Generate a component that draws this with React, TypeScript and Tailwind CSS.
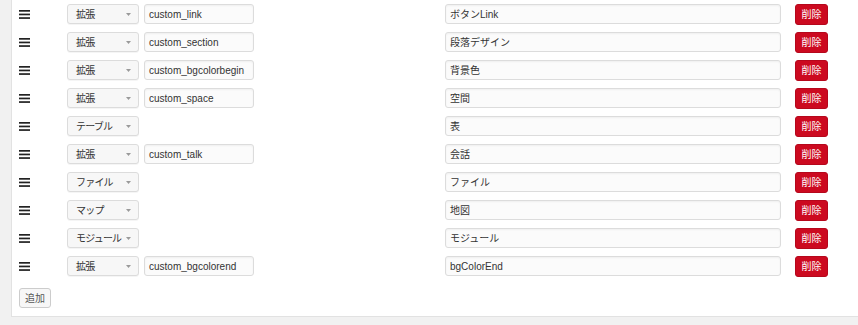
import React from "react";

const rows: { type: string; key?: string; label: string }[] = [
  { type: "拡張", key: "custom_link", label: "ボタンLink" },
  { type: "拡張", key: "custom_section", label: "段落デザイン" },
  { type: "拡張", key: "custom_bgcolorbegin", label: "背景色" },
  { type: "拡張", key: "custom_space", label: "空間" },
  { type: "テーブル", label: "表" },
  { type: "拡張", key: "custom_talk", label: "会話" },
  { type: "ファイル", label: "ファイル" },
  { type: "マップ", label: "地図" },
  { type: "モジュール", label: "モジュール" },
  { type: "拡張", key: "custom_bgcolorend", label: "bgColorEnd" },
];

const font = {
  fontFamily: '"Liberation Sans", "Noto Sans CJK JP", sans-serif',
};

function Handle() {
  return (
    <svg width="11" height="9" viewBox="0 0 11 9" className="block">
      <rect x="0" y="0" width="11" height="1.7" fill="#222" />
      <rect x="0" y="3.6" width="11" height="1.7" fill="#222" />
      <rect x="0" y="7.2" width="11" height="1.7" fill="#222" />
    </svg>
  );
}

export default function App() {
  return (
    <div
      className="w-[858px] h-[325px] bg-[#f1f1f1] pl-[11px] text-[10px] text-[#333]"
      style={font}
    >
      <div className="bg-white border-l border-b border-[#e2e2e2] pl-[7px] pt-1 pb-2">
        <div className="flex flex-col gap-2">
          {rows.map((r, i) => (
            <div key={i} className="flex items-center h-5">
              <div className="w-12 flex items-center">
                <Handle />
              </div>
              <div className="w-[72px] h-5 flex items-center pl-2 pr-[7px] bg-[#f7f7f7] border border-[#dcdcdc] rounded-[3px] shadow-[0_1px_0_rgba(0,0,0,0.04)]">
                <span className="flex-1 whitespace-nowrap tracking-[-0.8px]">
                  {r.type}
                </span>
                <svg width="5" height="3" viewBox="0 0 5 3" className="shrink-0 ml-[2px]">
                  <path d="M0 0 L5 0 L2.5 3 Z" fill="#9a9a9a" />
                </svg>
              </div>
              <div className="w-[110px] ml-[5px]">
                {r.key && (
                  <div className="h-5 flex items-center px-[4px] bg-[#fbfbfb] border border-[#dcdcdc] rounded-[3px] shadow-[inset_0_1px_2px_rgba(0,0,0,0.05)] whitespace-nowrap">
                    {r.key}
                  </div>
                )}
              </div>
              <div className="ml-[191px] w-[336px] h-5 flex items-center px-[4px] bg-[#fbfbfb] border border-[#dcdcdc] rounded-[3px] shadow-[inset_0_1px_2px_rgba(0,0,0,0.05)] whitespace-nowrap">
                {r.label}
              </div>
              <div className="ml-[14px] w-[33px] h-[21px] flex items-center justify-center bg-[#cc0a20] rounded-[3px] text-white border border-[#b5081c]">
                削除
              </div>
            </div>
          ))}
        </div>
        <div className="mt-3 w-8 h-5 flex items-center justify-center bg-[#f7f7f7] border border-[#cccccc] rounded-[3px] text-[#555]">
          追加
        </div>
      </div>
    </div>
  );
}
